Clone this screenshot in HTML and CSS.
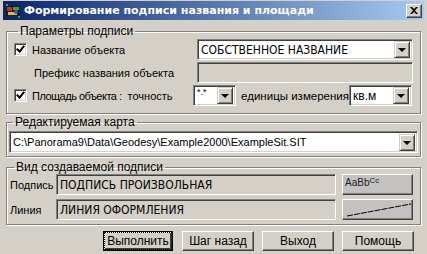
FILE: index.html
```html
<!DOCTYPE html>
<html lang="ru">
<head>
    <meta charset="UTF-8">
    <title>Формирование подписи названия и площади</title>
    <link rel="stylesheet" href="styles.css">
</head>
<body>
<div class="window">
    <div class="titlebar">
        <svg class="app-icon" width="16" height="16" viewBox="0 0 16 16">
            <rect x="1" y="3" width="14" height="10" fill="#1a1a1a"/>
            <rect x="2" y="4" width="5" height="4" fill="#c03030"/>
            <rect x="8" y="4" width="6" height="3" fill="#40a040"/>
            <rect x="3" y="9" width="9" height="3" fill="#e0c020"/>
            <circle cx="11" cy="9" r="2" fill="#3060d0"/>
            <rect x="1" y="1" width="2" height="2" fill="#30b030"/>
            <rect x="13" y="13" width="2" height="2" fill="#30b030"/>
        </svg>
        <span class="title">Формирование подписи названия и площади</span>
        <div class="close-btn">
            <svg width="8" height="7" viewBox="0 0 8 7">
                <path d="M0 0 L2 0 L4 2 L6 0 L8 0 L5 3.5 L8 7 L6 7 L4 5 L2 7 L0 7 L3 3.5 Z" fill="#000"/>
            </svg>
        </div>
    </div>

    <fieldset class="group params">
        <legend>Параметры подписи</legend>
        <div class="row">
            <label class="check"><span class="box checked"></span>Название объекта</label>
            <div class="combo wide"><span class="value narrow">СОБСТВЕННОЕ НАЗВАНИЕ</span><span class="drop"></span></div>
        </div>
        <div class="row">
            <span class="indent">Префикс названия объекта</span>
            <div class="field wide disabled"></div>
        </div>
        <div class="row">
            <label class="check area"><span class="box checked"></span>Площадь объекта :</label>
            <span class="caption">точность</span>
            <div class="combo precision"><span class="value tiny">*.*</span><span class="drop"></span></div>
            <span class="units">единицы измерения</span>
            <div class="combo unit"><span class="value">кв.м</span><span class="drop"></span></div>
        </div>
    </fieldset>

    <fieldset class="group map">
        <legend>Редактируемая карта</legend>
        <div class="combo path"><span class="value">C:\Panorama9\Data\Geodesy\Example2000\ExampleSit.SIT</span><span class="drop"></span></div>
    </fieldset>

    <fieldset class="group preview">
        <legend>Вид создаваемой подписи</legend>
        <div class="row">
            <span class="lbl">Подпись</span>
            <div class="field long disabled"><span class="value narrow">ПОДПИСЬ ПРОИЗВОЛЬНАЯ</span></div>
            <div class="sample"><span class="sample-text">AaBb<small>Cc</small></span></div>
        </div>
        <div class="row">
            <span class="lbl">Линия</span>
            <div class="field long disabled"><span class="value narrow">ЛИНИЯ ОФОРМЛЕНИЯ</span></div>
            <div class="sample">
                <svg width="67" height="17" viewBox="0 0 67 17">
                    <line x1="2" y1="15" x2="66" y2="3" stroke="#000" stroke-width="1" stroke-dasharray="6 1"/>
                </svg>
            </div>
        </div>
    </fieldset>

    <div class="buttons">
        <button class="default"><span class="focus">Выполнить</span></button>
        <button>Шаг назад</button>
        <button>Выход</button>
        <button>Помощь</button>
    </div>
</div>
</body>
</html>
```

FILE: styles.css
```css
body {
    margin: 0;
    background: #d4d0c8;
    font-family: "Liberation Sans", Arial, sans-serif;
    font-size: 11px;
    color: #000;
}
.window {
    width: 427px;
    height: 254px;
    box-sizing: border-box;
    padding: 1px 3px 0 3px;
    overflow: hidden;
    white-space: nowrap;
}
.titlebar {
    height: 19px;
    display: flex;
    align-items: center;
    padding: 0 2px 0 2px;
    background: linear-gradient(to right, #0a246a, #a6caf0);
    color: #fff;
}
.app-icon {
    margin-right: 3px;
}
.title {
    font-family: "DejaVu Sans", sans-serif;
    font-weight: bold;
    font-size: 11px;
    flex: 1;
}
.close-btn {
    width: 16px;
    height: 14px;
    box-sizing: border-box;
    background: #d4d0c8;
    border: 1px solid;
    border-color: #fff #404040 #404040 #fff;
    box-shadow: inset -1px -1px #808080;
    display: flex;
    align-items: center;
    justify-content: center;
}
.group {
    margin: 0 0 0 3px;
    width: 415px;
    box-sizing: border-box;
    border: 1px solid #808080;
    box-shadow: inset 1px 1px #fff, 1px 1px #fff;
    padding: 0;
    min-width: 0;
}
legend {
    padding: 0 2px;
    margin-left: 4px;
    font-size: 12px;
}
.params {
    margin-top: 4px;
    padding: 1px 7px 7px 7px;
}
.row {
    display: flex;
    align-items: center;
    height: 21px;
    margin-bottom: 2px;
}
.params .row:last-child {
    margin-bottom: 0;
}
.check {
    display: flex;
    align-items: center;
    width: 183px;
}
.check.area {
    width: 116px;
    letter-spacing: -0.5px;
}
.box {
    width: 13px;
    height: 13px;
    box-sizing: border-box;
    background: #fff;
    border: 1px solid;
    border-color: #808080 #fff #fff #808080;
    box-shadow: inset 1px 1px #404040, inset -1px -1px #d4d0c8;
    margin-right: 5px;
    position: relative;
    flex: none;
}
.box.checked::after {
    content: "";
    position: absolute;
    left: 3px;
    top: 0;
    width: 3px;
    height: 6px;
    border: solid #000;
    border-width: 0 2px 2px 0;
    transform: rotate(40deg);
}
.indent {
    width: 163px;
    padding-left: 20px;
}
.combo,
.field {
    height: 21px;
    box-sizing: border-box;
    border: 1px solid;
    border-color: #808080 #fff #fff #808080;
    box-shadow: inset 1px 1px #404040, inset -1px -1px #d4d0c8;
    background: #fff;
    display: flex;
    align-items: center;
    padding: 0 2px 0 3px;
    flex: none;
}
.field.disabled {
    background: #d4d0c8;
}
.wide {
    width: 216px;
}
.value {
    flex: 1;
    overflow: hidden;
    font-size: 12px;
}
.narrow {
    font-family: "DejaVu Sans Condensed", "DejaVu Sans", sans-serif;
    font-stretch: condensed;
    font-size: 12px;
}
.tiny {
    font-size: 9px;
    align-self: flex-start;
    padding-top: 1px;
}
.drop {
    width: 16px;
    height: 17px;
    box-sizing: border-box;
    background: #d4d0c8;
    border: 1px solid;
    border-color: #d4d0c8 #404040 #404040 #d4d0c8;
    box-shadow: inset 1px 1px #fff, inset -1px -1px #808080;
    position: relative;
    flex: none;
}
.drop::after {
    content: "";
    position: absolute;
    left: 3px;
    top: 6px;
    border-style: solid;
    border-width: 4px 4px 0 4px;
    border-color: #000 transparent transparent transparent;
}
.caption {
    width: 67px;
}
.precision {
    width: 43px;
}
.units {
    flex: 1;
    margin-left: 5px;
    font-size: 11.5px;
}
.unit {
    width: 63px;
    margin-right: 1px;
}
.map {
    margin-top: 1px;
    padding: 2px 2px 3px 2px;
}
.path {
    width: 409px;
    height: 22px;
}
.path .value {
    font-size: 11px;
}
.preview {
    margin-top: 3px;
    padding: 0 7px 4px 3px;
}
.preview .row {
    margin-bottom: 4px;
}
.preview .row:last-child {
    margin-bottom: 0;
}
.lbl {
    width: 46px;
}
.long {
    width: 280px;
}
.sample {
    margin-left: 6px;
    width: 71px;
    height: 21px;
    box-sizing: border-box;
    background: #c4c2c0;
    border: 1px solid;
    border-color: #fff #404040 #404040 #fff;
    box-shadow: inset -1px -1px #808080;
    display: flex;
    align-items: center;
    justify-content: flex-start;
    padding-left: 2px;
    flex: none;
}
.sample-text {
    font-size: 10px;
    align-self: flex-start;
    margin-top: 1px;
    color: #202020;
}
.sample-text small {
    font-size: 8px;
    vertical-align: 3px;
}
.buttons {
    display: flex;
    justify-content: flex-end;
    gap: 8px;
    padding: 6px 10px 0 0;
}
button {
    width: 72px;
    height: 20px;
    box-sizing: border-box;
    background: #d4d0c8;
    font-family: "Liberation Sans", Arial, sans-serif;
    font-size: 12px;
    color: #000;
    border: 1px solid;
    border-color: #fff #404040 #404040 #fff;
    box-shadow: inset -1px -1px #808080;
    padding: 0;
}
button.default {
    width: 70px;
    margin-right: 1px;
    border: 1px solid #000;
    box-shadow: inset 1px 1px #fff, inset -2px -2px #404040;
}
.focus {
    outline: 1px dotted #000;
    padding: 1px 2px;
}
```
